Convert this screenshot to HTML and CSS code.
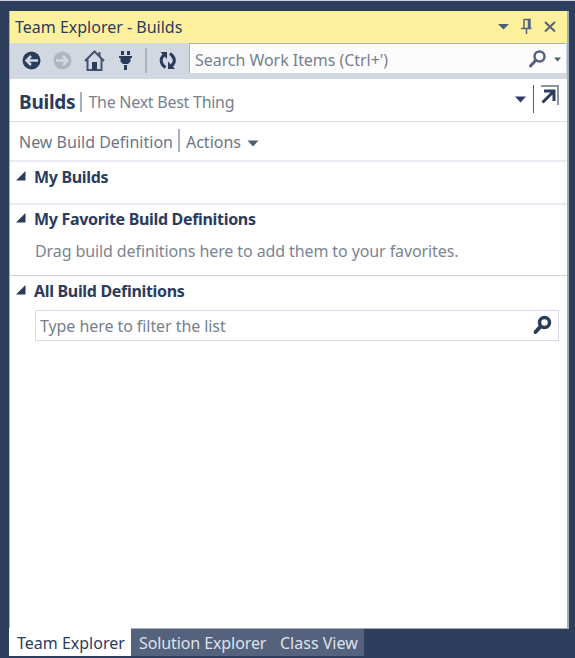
FILE: index.html
```
<!DOCTYPE html>
<html lang="en">
<head>
<meta charset="utf-8">
<title>Team Explorer - Builds</title>
<link rel="stylesheet" href="styles.css">
</head>
<body>
<div class="window">
  <main class="panel">
    <header class="titlebar">
      <span class="title">Team Explorer - Builds</span>
      <svg class="window-buttons" width="64" height="20" viewBox="0 0 64 20">
        <path class="slate" d="M3 7h11l-5.500 5.500z"/>
        <path class="slate-line" d="M29 2.500h6v8.500M29 2v9M33.500 3v8M26 11.500h10.500M31.500 12v5"/>
        <path class="slate-line cross" d="M50 5l10 9.500M60 5L50 14.500"/>
      </svg>
    </header>
    <nav class="toolbar">
      <svg class="tools" width="179" height="35" viewBox="0 0 179 35">
        <circle class="navy" cx="21.500" cy="17.500" r="9"/>
        <path class="nav-arrow" d="M28 17.500H17M21 13l-4.500 4.500L21 22"/>
        <circle class="disabled" cx="52.500" cy="17.500" r="9"/>
        <path class="nav-arrow muted" d="M46 17.500h11M53 13l4.500 4.500L53 22"/>
        <path class="home" d="M75 18l9.500-9.500L94 18M77.500 16v11h14V16M89.500 13V9"/>
        <path class="navy" d="M82 19h5v8h-5z"/>
        <path class="navy" d="M111 8h3v4h-3zM117 8h3v4h-3zM109 13h13v2h-1.500v3.500l-2.500 2.500h-5l-2.500-2.500V15H109zM114 22h3v5h-3z"/>
        <path class="divider" d="M136 5v25"/>
        <path class="refresh" d="M154 12c-4 3.500-4 8.500 1.500 12.500M161.500 23c4-3.500 4-8.500-1.500-12.500"/>
        <path class="navy" d="M150.500 9h6.500v7zM165 26h-7v-7.500z"/>
      </svg>
      <div class="search">
        <span class="search-text">Search Work Items (Ctrl+')</span>
        <svg width="40" height="28" viewBox="0 0 40 28">
          <circle class="lens soft" cx="13.500" cy="11.500" r="5"/>
          <path class="handle soft" d="M10 15l-5.500 6"/>
          <path class="slate" d="M28 12.500h7l-3.500 4z"/>
        </svg>
      </div>
    </nav>
    <section class="page-head">
      <h1>Builds</h1><i class="bar"></i><span class="project">The Next Best Thing</span>
      <svg class="head-icons" width="50" height="34" viewBox="0 0 50 34">
        <path class="navy" d="M2 11.500h11l-5.500 6z"/>
        <path class="vline" d="M20.500 0v28"/>
        <path class="corner" d="M28 1h17v19"/>
        <path class="popout" d="M29.500 17.500L41 6M31 6h10v10"/>
      </svg>
    </section>
    <section class="actions">
      <span class="new-build">New Build Definition</span><i class="bar"></i><span class="action-menu">Actions</span>
      <svg width="12" height="7" viewBox="0 0 12 7"><path class="slate" d="M.5.500h11L6 6.500z"/></svg>
    </section>
    <section class="group my-builds">
      <h2><svg width="10" height="10" viewBox="0 0 10 10"><path class="navy" d="M9.500 0v9.500H0z"/></svg><span class="mine">My Builds</span></h2>
    </section>
    <section class="group favorites">
      <h2><svg width="10" height="10" viewBox="0 0 10 10"><path class="navy" d="M9.500 0v9.500H0z"/></svg><span class="favs">My Favorite Build Definitions</span></h2>
      <p>Drag build definitions here to add them to your favorites.</p>
    </section>
    <section class="group all">
      <h2><svg width="10" height="10" viewBox="0 0 10 10"><path class="navy" d="M9.500 0v9.500H0z"/></svg><span class="every">All Build Definitions</span></h2>
      <div class="filter">
        <span class="filter-text">Type here to filter the list</span>
        <svg width="20" height="22" viewBox="0 0 20 22">
          <circle class="lens" cx="12.500" cy="7.500" r="5"/>
          <path class="handle" d="M8.500 11.500l-5 5.500"/>
        </svg>
      </div>
    </section>
  </main>
  <footer class="tabs">
    <span class="tab active"><b>Team Explorer</b></span>
    <span class="tab solution"><b>Solution Explorer</b></span>
    <span class="tab class-view"><b>Class View</b></span>
  </footer>
</div>
</body>
</html>
```
FILE: styles.css
```
* { box-sizing: border-box; }
body {
  margin: 0;
  font: 16px/22px "Noto Sans", "Open Sans", sans-serif;
  color: #2b3b5c;
  white-space: nowrap;
}
h1, h2, p { margin: 0; }
svg { display: block; flex: none; fill: none; }
.window {
  height: 658px;
  padding: 10px 6px 0 9px;
  background: #2d3d5c;
  border-top: 1px solid #cbd3df;
  overflow: hidden;
}
.panel {
  height: 618px;
  background: #fff;
  border: 1px solid #a5adbb;
  border-top: 0;
  border-right-width: 2px;
}
.titlebar {
  display: flex;
  align-items: center;
  justify-content: space-between;
  height: 32px;
  padding: 0 8px 0 5px;
  background: #fdf09d;
}
.toolbar {
  display: flex;
  height: 36px;
  background: #d2d8e2;
}
.search {
  display: flex;
  flex: 1;
  justify-content: space-between;
  align-items: center;
  height: 30px;
  padding-left: 5px;
  margin-right: 1px;
  background: #fcfcfd;
  border: 1px solid #aab2c2;
  border-width: 1px 0 0 1px;
  color: #77808f;
}
.search-text { padding-top: 2px; letter-spacing: -.05px; }
.page-head {
  display: flex;
  align-items: center;
  height: 43px;
  padding: 3px 4px 0 9px;
  border-bottom: 1px solid #d9dfe8;
}
h1 { font-size: 19px; font-weight: 700; letter-spacing: -.25px; }
.bar { width: 2px; height: 20px; background: #a7b0be; }
.page-head .bar { margin: 0 6px 0 5px; }
.project { color: #77808f; letter-spacing: -.26px; }
.head-icons { margin-left: auto; }
.actions {
  display: flex;
  align-items: center;
  height: 40px;
  padding: 1px 0 0 9px;
  border-bottom: 2px solid #e8ecf2;
  color: #6b7587;
}
.actions .bar { height: 23px; margin: -2px 6px 0 5px; }
.actions svg { margin: 3px 0 0 6px; }
.group { padding: 4px 8px 0 6px; }
h2 { display: flex; align-items: center; font-size: 16px; line-height: 22px; font-weight: 700; letter-spacing: -.32px; }
h2 svg { margin: -2px 8px 0 0; }
.my-builds { height: 43px; border-bottom: 2px solid #e8ecf2; }
.favorites { height: 71px; padding-top: 3px; border-bottom: 1px solid #cbd3e1; }
.group p { margin: 10px 0 0 19px; color: #7b8492; letter-spacing: -.1px; }
.filter {
  display: flex;
  align-items: center;
  justify-content: space-between;
  height: 31px;
  margin: 8px 0 0 19px;
  padding: 0 6px 0 4px;
  border: 1px solid #d3dae6;
  color: #77808f;
}
.filter-text { letter-spacing: -.07px; }
.tabs { display: flex; height: 27px; }
.tab { padding: 3px 0 0 8px; background: #54627d; color: #dfe3e9; }
.tab b { font-weight: 400; }
.active { width: 122px; height: 28px; margin-top: -1px; padding-top: 4px; background: #fff; color: #2b3b5c; }
.solution { width: 141px; letter-spacing: -.1px; }
.class-view { width: 92px; }
.slate { fill: #4e5d78; }
.navy { fill: #2b3b5c; }
.disabled { fill: #b1b5bd; }
.slate-line { stroke: #56627a; stroke-width: 1.500; }
.cross { stroke-width: 2; }
.nav-arrow { stroke: #d2d8e2; stroke-width: 2.500; }
.home { stroke: #45536e; stroke-width: 2; }
.divider { stroke: #acb1bb; stroke-width: 2; }
.refresh { stroke: #2b3b5c; stroke-width: 3; }
.lens { stroke: #2b3b5c; stroke-width: 3.500; }
.handle { stroke: #2b3b5c; stroke-width: 4; stroke-linecap: round; }
.soft { stroke: #56627a; stroke-width: 2.500; }
.handle.soft { stroke-width: 3; }
.vline { stroke: #56627a; }
.corner { stroke: #8993a3; stroke-width: 2; }
.popout { stroke: #2b3b5c; stroke-width: 3; }
```
